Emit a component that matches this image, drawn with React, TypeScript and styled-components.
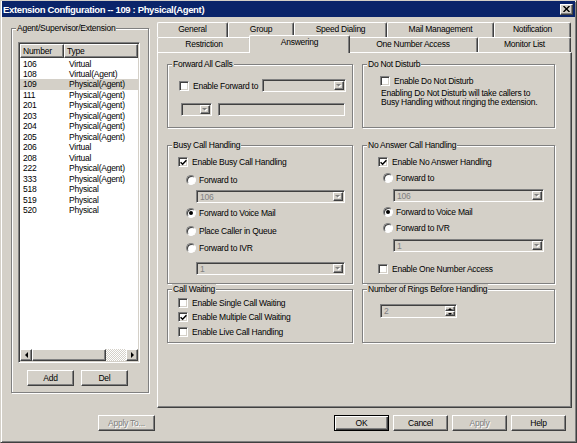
import React from 'react'
import styled, { createGlobalStyle } from 'styled-components'

const FACE = '#d4d0c8'
const SHADOW = '#808080'
const DARK = '#404040'
const FONT = `"Liberation Sans", Arial, sans-serif`

const GlobalStyle = createGlobalStyle`
  * { box-sizing: border-box; }
  html, body { margin: 0; padding: 0; background: ${FACE}; }
  body { font-family: ${FONT}; font-size: 8.5px; letter-spacing: -0.25px; color: #000; }
`

const Window = styled.div`
  width: 577px;
  height: 443px;
  display: flex;
  flex-direction: column;
  background: ${FACE};
  border: 1px solid;
  border-color: ${FACE} ${DARK} ${DARK} ${FACE};
  box-shadow: inset 1px 1px 0 #fff, inset -1px -1px 0 ${SHADOW};
  overflow: hidden;
`

const TitleBar = styled.div`
  height: 16px;
  margin: 0 1px;
  padding: 0 2px 0 1px;
  display: flex;
  align-items: center;
  justify-content: space-between;
  background: #0a246a;
  color: #fff;
  font-weight: bold;
  font-size: 9.5px;
  letter-spacing: -0.35px;
  white-space: nowrap;
`

const raised = `
  border: 1px solid;
  border-color: #fff ${DARK} ${DARK} #fff;
  box-shadow: inset -1px -1px 0 ${SHADOW};
  background: ${FACE};
`

const sunken = `
  border: 1px solid;
  border-color: ${SHADOW} #fff #fff ${SHADOW};
  box-shadow: inset 1px 1px 0 ${DARK}, inset -1px -1px 0 ${FACE};
`

const CloseBtn = styled.div`
  ${raised}
  width: 13px;
  height: 11px;
  display: flex;
  align-items: center;
  justify-content: center;
`

const Content = styled.div`
  flex: 1;
  display: flex;
  flex-direction: column;
  gap: 7px;
  padding: 5px 4px 11px 10px;
  min-height: 0;
`

const MainRow = styled.div`
  flex: 1;
  display: flex;
  gap: 8px;
  min-height: 0;
`

const LeftCol = styled.div`
  width: 138px;
  display: flex;
  flex-direction: column;
`

const Group = styled.div<{ $h: number; $mt?: number }>`
  position: relative;
  height: ${p => p.$h}px;
  margin-top: ${p => p.$mt ?? 0}px;
  border: 1px solid ${SHADOW};
  box-shadow: inset 1px 1px 0 #fff, 1px 1px 0 #fff;
  display: flex;
  flex-direction: column;
`

const Legend = styled.span`
  position: absolute;
  top: -6px;
  left: 4px;
  padding: 0 1px;
  line-height: 11px;
  background: ${FACE};
  white-space: nowrap;
`

const ExtensionBody = styled.div`
  display: flex;
  flex-direction: column;
  padding: 13px 0 0 6px;
`

const ListView = styled.div`
  ${sunken}
  width: 122px;
  height: 321px;
  background: #fff;
  display: flex;
  flex-direction: column;
  padding: 1px;
`

const ListHeader = styled.div`
  display: flex;
  height: 14px;
`

const HeaderCell = styled.div<{ $w?: number }>`
  ${raised}
  ${p => (p.$w ? `width: ${p.$w}px;` : 'flex: 1;')}
  line-height: 12px;
  padding-left: 2px;
`

const ListRows = styled.div`
  flex: 1;
  padding-top: 0.5px;
`

const ListRow = styled.div<{ $selected?: boolean }>`
  display: flex;
  height: 10.47px;
  line-height: 10.47px;
  padding-left: 3px;
  background: ${p => (p.$selected ? FACE : 'transparent')};
`

const NumberCol = styled.span`
  width: 46px;
`

const ScrollBar = styled.div`
  display: flex;
  height: 12px;
`

const ScrollArrow = styled.div`
  ${raised}
  width: 12px;
  display: flex;
  align-items: center;
  justify-content: center;
`

const ScrollThumb = styled.div`
  ${raised}
  width: 74px;
`

const ScrollTrack = styled.div`
  flex: 1;
  background: repeating-conic-gradient(#fff 0 25%, ${FACE} 0 50%) 0 0 / 2px 2px;
`

const SmallButtons = styled.div`
  display: flex;
  gap: 7px;
  margin: 7px 0 0 9px;
`

const Button = styled.div<{ $w: number; $default?: boolean; $disabled?: boolean }>`
  width: ${p => p.$w}px;
  height: 16px;
  display: flex;
  align-items: center;
  justify-content: center;
  background: ${FACE};
  border: 1px solid;
  border-color: ${p => (p.$default ? '#000' : `#fff ${DARK} ${DARK} #fff`)};
  box-shadow: ${p =>
    p.$default
      ? `inset 1px 1px 0 #fff, inset -1px -1px 0 ${DARK}, inset -2px -2px 0 ${SHADOW}`
      : `inset -1px -1px 0 ${SHADOW}`};
  color: ${p => (p.$disabled ? SHADOW : '#000')};
  text-shadow: ${p => (p.$disabled ? '1px 1px 0 #fff' : 'none')};
`

const TabControl = styled.div`
  flex: 1;
  display: flex;
  flex-direction: column;
`

const TabRow = styled.div`
  display: flex;
  height: 15px;
`

const Tab = styled.div<{ $w: number; $active?: boolean }>`
  position: relative;
  width: ${p => p.$w + (p.$active ? 4 : 0)}px;
  height: ${p => (p.$active ? 18 : 15)}px;
  margin: ${p => (p.$active ? '-2px -2px -1px' : '0')};
  z-index: ${p => (p.$active ? 2 : 0)};
  background: ${FACE};
  border-top: 1px solid #fff;
  border-left: 1px solid #fff;
  border-right: 1px solid ${DARK};
  border-radius: 2px 2px 0 0;
  box-shadow: inset -1px 0 0 ${SHADOW};
  text-align: center;
  line-height: ${p => (p.$active ? 12 : 13)}px;
  white-space: nowrap;
`

const Panel = styled.div`
  position: relative;
  z-index: 1;
  flex: 1;
  border: 1px solid;
  border-color: #fff ${DARK} ${DARK} #fff;
  box-shadow: inset -1px -1px 0 ${SHADOW};
  padding: 11px 0 0 9px;
`

const Columns = styled.div`
  display: grid;
  grid-template-columns: 186px 193px;
  column-gap: 9px;
  align-items: start;
`

const GroupBody = styled.div<{ $pl: number }>`
  display: flex;
  flex-direction: column;
  padding-left: ${p => p.$pl}px;
`

const Line = styled.div<{ $mt: number; $ml?: number; $h?: number }>`
  display: flex;
  align-items: center;
  height: ${p => p.$h ?? 11}px;
  margin-top: ${p => p.$mt}px;
  margin-left: ${p => p.$ml ?? 0}px;
  white-space: nowrap;
`

const CheckBox = styled.div`
  ${sunken}
  width: 10px;
  height: 10px;
  flex: none;
  background: #fff;
  display: flex;
  align-items: center;
  justify-content: center;
  margin-right: 4px;
`

const RadioBox = styled.div`
  width: 10px;
  height: 10px;
  flex: none;
  border-radius: 50%;
  border: 1px solid;
  border-color: ${SHADOW} #fff #fff ${SHADOW};
  box-shadow: inset 1px 1px 0 ${DARK};
  background: #fff;
  display: flex;
  align-items: center;
  justify-content: center;
  margin-right: 3px;
`

const RadioDot = styled.div`
  width: 4px;
  height: 4px;
  border-radius: 50%;
  background: #000;
`

const Note = styled.div`
  margin: 2.5px 0 0 1px;
  line-height: 9.5px;
  white-space: nowrap;
`

const Field = styled.div<{ $w: number; $h?: number }>`
  ${sunken}
  width: ${p => p.$w}px;
  height: ${p => p.$h ?? 13}px;
  flex: none;
  background: ${FACE};
  color: ${SHADOW};
  display: flex;
  padding: 1px;
`

const FieldValue = styled.div`
  flex: 1;
  padding-left: 2px;
  line-height: 10px;
`

const DropButton = styled.div`
  ${raised}
  width: 10px;
  display: flex;
  align-items: center;
  justify-content: center;
`

const SpinButtons = styled.div`
  width: 10px;
  display: flex;
  flex-direction: column;
`

const SpinHalf = styled.div`
  ${raised}
  flex: 1;
  display: flex;
  align-items: center;
  justify-content: center;
`

const FlexGap = styled.div<{ $w: number }>`
  width: ${p => p.$w}px;
  flex: none;
`

const Spacer = styled.div`
  flex: 1;
`

const ButtonRow = styled.div`
  display: flex;
  height: 16px;
  padding-left: 87px;
`

const DialogButtons = styled.div`
  display: flex;
  gap: 4px;
  margin-right: 6px;
`

function Check({ checked, label }: { checked?: boolean; label: string }) {
  return (
    <>
      <CheckBox>
        {checked && (
          <svg width="7" height="7" viewBox="0 0 7 7">
            <path d="M0.6 3.2 L2.6 5.2 L6.4 1.2" fill="none" stroke="#000" strokeWidth="1.5" />
          </svg>
        )}
      </CheckBox>
      <span>{label}</span>
    </>
  )
}

function Radio({ checked, label }: { checked?: boolean; label: string }) {
  return (
    <>
      <RadioBox>{checked && <RadioDot />}</RadioBox>
      <span>{label}</span>
    </>
  )
}

function GrayArrow() {
  return (
    <svg width="6" height="4" viewBox="0 0 6 4">
      <polygon points="1,1 6,1 3.5,3.5" fill="#fff" />
      <polygon points="0,0 5,0 2.5,2.5" fill={SHADOW} />
    </svg>
  )
}

function Combo({ w, value }: { w: number; value?: string }) {
  return (
    <Field $w={w}>
      <FieldValue>{value}</FieldValue>
      <DropButton>
        <GrayArrow />
      </DropButton>
    </Field>
  )
}

function ArrowGlyph({ dir }: { dir: 'left' | 'right' | 'up' | 'down' }) {
  const pts = {
    left: '3,0 3,6 0,3',
    right: '0,0 0,6 3,3',
    up: '0,2 4,2 2,0',
    down: '0,0 4,0 2,2',
  }[dir]
  const horiz = dir === 'left' || dir === 'right'
  return (
    <svg width={horiz ? 3 : 4} height={horiz ? 6 : 2} viewBox={horiz ? '0 0 3 6' : '0 0 4 2'}>
      <polygon points={pts} fill="#000" />
    </svg>
  )
}

const extensions: [string, string][] = [
  ['106', 'Virtual'],
  ['108', 'Virtual(Agent)'],
  ['109', 'Physical(Agent)'],
  ['111', 'Physical(Agent)'],
  ['201', 'Physical(Agent)'],
  ['203', 'Physical(Agent)'],
  ['204', 'Physical(Agent)'],
  ['205', 'Physical(Agent)'],
  ['206', 'Virtual'],
  ['208', 'Virtual'],
  ['222', 'Physical(Agent)'],
  ['333', 'Physical(Agent)'],
  ['518', 'Physical'],
  ['519', 'Physical'],
  ['520', 'Physical'],
]

const topTabs: [string, number][] = [
  ['General', 71],
  ['Group', 66],
  ['Speed Dialing', 93],
  ['Mail Management', 107],
  ['Notification', 77],
]

const bottomTabs: [string, number][] = [
  ['Restriction', 94],
  ['Answering', 97],
  ['One Number Access', 130],
  ['Monitor List', 93],
]

export default function App() {
  return (
    <>
      <GlobalStyle />
      <Window>
        <TitleBar>
          <span>Extension Configuration -- 109 : Physical(Agent)</span>
          <CloseBtn>
            <svg width="7" height="6" viewBox="0 0 7 6">
              <path d="M0.5 0 L6.5 6 M6.5 0 L0.5 6" stroke="#000" strokeWidth="1.4" />
            </svg>
          </CloseBtn>
        </TitleBar>
        <Content>
          <MainRow>
            <LeftCol>
              <Group $h={365} $mt={6}>
                <Legend>Agent/Supervisor/Extension</Legend>
                <ExtensionBody>
                  <ListView>
                    <ListHeader>
                      <HeaderCell $w={44}>Number</HeaderCell>
                      <HeaderCell>Type</HeaderCell>
                    </ListHeader>
                    <ListRows>
                      {extensions.map(([num, type]) => (
                        <ListRow key={num} $selected={num === '109'}>
                          <NumberCol>{num}</NumberCol>
                          <span>{type}</span>
                        </ListRow>
                      ))}
                    </ListRows>
                    <ScrollBar>
                      <ScrollArrow>
                        <ArrowGlyph dir="left" />
                      </ScrollArrow>
                      <ScrollThumb />
                      <ScrollTrack />
                      <ScrollArrow>
                        <ArrowGlyph dir="right" />
                      </ScrollArrow>
                    </ScrollBar>
                  </ListView>
                  <SmallButtons>
                    <Button $w={47}>Add</Button>
                    <Button $w={47}>Del</Button>
                  </SmallButtons>
                </ExtensionBody>
              </Group>
            </LeftCol>
            <TabControl>
              <TabRow>
                {topTabs.map(([label, w]) => (
                  <Tab key={label} $w={w}>
                    {label}
                  </Tab>
                ))}
              </TabRow>
              <TabRow>
                {bottomTabs.map(([label, w]) => (
                  <Tab key={label} $w={w} $active={label === 'Answering'}>
                    {label}
                  </Tab>
                ))}
              </TabRow>
              <Panel>
                <Columns>
                  <Group $h={64}>
                    <Legend>Forward All Calls</Legend>
                    <GroupBody $pl={11}>
                      <Line $mt={14} $h={13}>
                        <Check label="Enable Forward to" />
                        <Spacer />
                        <Combo w={84} />
                        <FlexGap $w={6} />
                      </Line>
                      <Line $mt={11} $h={13} $ml={2}>
                        <Combo w={31} />
                        <FlexGap $w={6} />
                        <Field $w={127} />
                      </Line>
                    </GroupBody>
                  </Group>
                  <Group $h={64}>
                    <Legend>Do Not Disturb</Legend>
                    <GroupBody $pl={17}>
                      <Line $mt={10}>
                        <Check label="Enable Do Not Disturb" />
                      </Line>
                      <Note>
                        Enabling Do Not Disturb will take callers to
                        <br />
                        Busy Handling without ringing the extension.
                      </Note>
                    </GroupBody>
                  </Group>
                  <Group $h={139} $mt={17}>
                    <Legend>Busy Call Handling</Legend>
                    <GroupBody $pl={10}>
                      <Line $mt={10.5}>
                        <Check checked label="Enable Busy Call Handling" />
                      </Line>
                      <Line $mt={6.5} $ml={8}>
                        <Radio label="Forward to" />
                      </Line>
                      <Line $mt={5} $ml={18} $h={13}>
                        <Combo w={149} value="106" />
                      </Line>
                      <Line $mt={4.5} $ml={8}>
                        <Radio checked label="Forward to Voice Mail" />
                      </Line>
                      <Line $mt={6.5} $ml={8}>
                        <Radio label="Place Caller in Queue" />
                      </Line>
                      <Line $mt={6.5} $ml={8}>
                        <Radio label="Forward to IVR" />
                      </Line>
                      <Line $mt={8.5} $ml={18} $h={13}>
                        <Combo w={149} value="1" />
                      </Line>
                    </GroupBody>
                  </Group>
                  <Group $h={139} $mt={17}>
                    <Legend>No Answer Call Handling</Legend>
                    <GroupBody $pl={15}>
                      <Line $mt={10.5}>
                        <Check checked label="Enable No Answer Handling" />
                      </Line>
                      <Line $mt={5} $ml={5}>
                        <Radio label="Forward to" />
                      </Line>
                      <Line $mt={5.5} $ml={15} $h={13}>
                        <Combo w={151} value="106" />
                      </Line>
                      <Line $mt={4} $ml={5}>
                        <Radio checked label="Forward to Voice Mail" />
                      </Line>
                      <Line $mt={5.5} $ml={5}>
                        <Radio label="Forward to IVR" />
                      </Line>
                      <Line $mt={5} $ml={15} $h={14}>
                        <Combo w={151} value="1" />
                      </Line>
                      <Line $mt={11}>
                        <Check label="Enable One Number Access" />
                      </Line>
                    </GroupBody>
                  </Group>
                  <Group $h={54} $mt={5}>
                    <Legend>Call Waiting</Legend>
                    <GroupBody $pl={10}>
                      <Line $mt={7.5}>
                        <Check label="Enable Single Call Waiting" />
                      </Line>
                      <Line $mt={3}>
                        <Check checked label="Enable Multiple Call Waiting" />
                      </Line>
                      <Line $mt={4}>
                        <Check label="Enable Live Call Handling" />
                      </Line>
                    </GroupBody>
                  </Group>
                  <Group $h={54} $mt={5}>
                    <Legend>Number of Rings Before Handling</Legend>
                    <GroupBody $pl={17}>
                      <Line $mt={14} $h={14}>
                        <Field $w={77} $h={14}>
                          <FieldValue>2</FieldValue>
                          <SpinButtons>
                            <SpinHalf>
                              <ArrowGlyph dir="up" />
                            </SpinHalf>
                            <SpinHalf>
                              <ArrowGlyph dir="down" />
                            </SpinHalf>
                          </SpinButtons>
                        </Field>
                      </Line>
                    </GroupBody>
                  </Group>
                </Columns>
              </Panel>
            </TabControl>
          </MainRow>
          <ButtonRow>
            <Button $w={57} $disabled>
              Apply To...
            </Button>
            <Spacer />
            <DialogButtons>
              <Button $w={55} $default>
                OK
              </Button>
              <Button $w={55}>Cancel</Button>
              <Button $w={55} $disabled>
                Apply
              </Button>
              <Button $w={55}>Help</Button>
            </DialogButtons>
          </ButtonRow>
        </Content>
      </Window>
    </>
  )
}
